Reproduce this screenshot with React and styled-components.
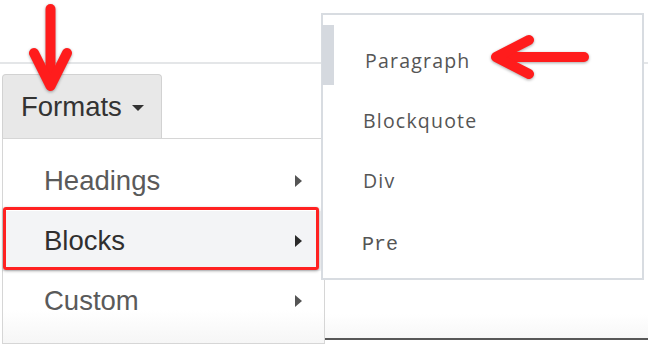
import React from "react";
import styled, { createGlobalStyle } from "styled-components";

const Global = createGlobalStyle`
  html, body { margin: 0; padding: 0; background: #fff; }
  body { font-family: "Liberation Sans", Arial, sans-serif; }
`;

const Page = styled.div`
  position: relative;
  width: 648px;
  height: 346px;
  overflow: hidden;
  background: #fff;
`;

const Header = styled.div`
  height: 62px;
  border-bottom: 2px solid #e4e6e8;
`;

const Toolbar = styled.div`
  display: flex;
  padding: 10px 0 0 2px;
`;

const FormatButton = styled.div`
  box-sizing: border-box;
  width: 160px;
  height: 64px;
  display: flex;
  align-items: center;
  padding-left: 18px;
  gap: 10px;
  background: #e8e8e8;
  border: 1px solid #d2d2d2;
  border-bottom: none;
  border-radius: 4px 4px 0 0;
  font-size: 27.5px;
  color: #333;
`;

const Caret = styled.span`
  width: 0;
  height: 0;
  margin-top: 2px;
  border-left: 6px solid transparent;
  border-right: 6px solid transparent;
  border-top: 6px solid #333;
`;

const Row = styled.div`
  display: flex;
  height: 208px;
`;

const Menu = styled.div`
  box-sizing: border-box;
  margin-left: 2px;
  width: 323px;
  height: 206px;
  border: 1px solid #d6d6d6;
  padding-top: 12px;
  background: linear-gradient(to bottom, #fff 84%, #f6f6f6);
`;

const Item = styled.div`
  position: relative;
  height: 60px;
  display: flex;
  align-items: center;
  justify-content: space-between;
  padding: 0 22px 0 41px;
  font-size: 27.5px;
  color: ${(p) => (p.$active ? "#2f2f2f" : "#5a5a5a")};
  background: ${(p) => (p.$active ? "#f3f4f6" : "transparent")};

  ${(p) =>
    p.$active &&
    `
    &::after {
      content: "";
      position: absolute;
      left: 0;
      top: -4px;
      width: 316px;
      height: 63px;
      box-sizing: border-box;
      border: 3px solid #ff2121;
      border-radius: 3px;
      box-shadow: 0 1px 3px rgba(0,0,0,0.35);
    }
  `}
`;

const SubArrow = styled.span`
  width: 0;
  height: 0;
  border-top: 6px solid transparent;
  border-bottom: 6px solid transparent;
  border-left: 7px solid ${(p) => (p.$active ? "#2a2a2a" : "#555")};
`;

const Editor = styled.div`
  flex: 1;
  height: 200px;
  border-bottom: 2px solid #575757;
  background: linear-gradient(to bottom, #fff 88%, #f7f7f7);
`;

const SubMenu = styled.div`
  position: absolute;
  left: 321px;
  top: 13px;
  box-sizing: border-box;
  width: 323px;
  height: 267px;
  border: 2px solid #d8dce1;
  background: #fff;
  padding-top: 15px;
`;

const ScrollMark = styled.div`
  position: absolute;
  left: -1px;
  top: 10px;
  width: 12px;
  height: 60px;
  background: #d5d9df;
`;

const SubItem = styled.div`
  height: 60px;
  display: flex;
  align-items: center;
  padding-left: ${(p) => p.$pad}px;
  padding-top: ${(p) => (p.$mono ? "4px" : "0")};
  font-family: ${(p) =>
    p.$mono ? '"Liberation Mono", "Courier New", monospace' : '"Open Sans", "Noto Sans", sans-serif'};
  font-size: ${(p) => (p.$mono ? "20px" : "19.5px")};
  letter-spacing: ${(p) => (p.$mono ? "0" : "1.2px")};
  color: #555;
`;

const Annotations = styled.svg`
  position: absolute;
  left: 0;
  top: 0;
  pointer-events: none;
  filter: drop-shadow(0 1px 1.5px rgba(0, 0, 0, 0.35));
`;

export default function App() {
  return (
    <Page>
      <Global />
      <Header />
      <Toolbar>
        <FormatButton>
          Formats
          <Caret />
        </FormatButton>
      </Toolbar>
      <Row>
        <Menu>
          <Item>
            Headings
            <SubArrow />
          </Item>
          <Item $active>
            Blocks
            <SubArrow $active />
          </Item>
          <Item>
            Custom
            <SubArrow />
          </Item>
        </Menu>
        <Editor />
      </Row>
      <SubMenu>
        <ScrollMark />
        <SubItem $pad={42}>Paragraph</SubItem>
        <SubItem $pad={40}>Blockquote</SubItem>
        <SubItem $pad={40}>Div</SubItem>
        <SubItem $pad={39} $mono>
          Pre
        </SubItem>
      </SubMenu>
      <Annotations width="648" height="346" viewBox="0 0 648 346">
        <g stroke="#ff1c1c" strokeWidth="10" strokeLinecap="round" strokeLinejoin="round" fill="none">
          <path d="M50.5 9 L50.5 84" />
          <path d="M34 53 L50.5 86 L67 53" />
          <path d="M584 57 L500 57" />
          <path d="M529 40 L496 57 L529 74" />
        </g>
      </Annotations>
    </Page>
  );
}
